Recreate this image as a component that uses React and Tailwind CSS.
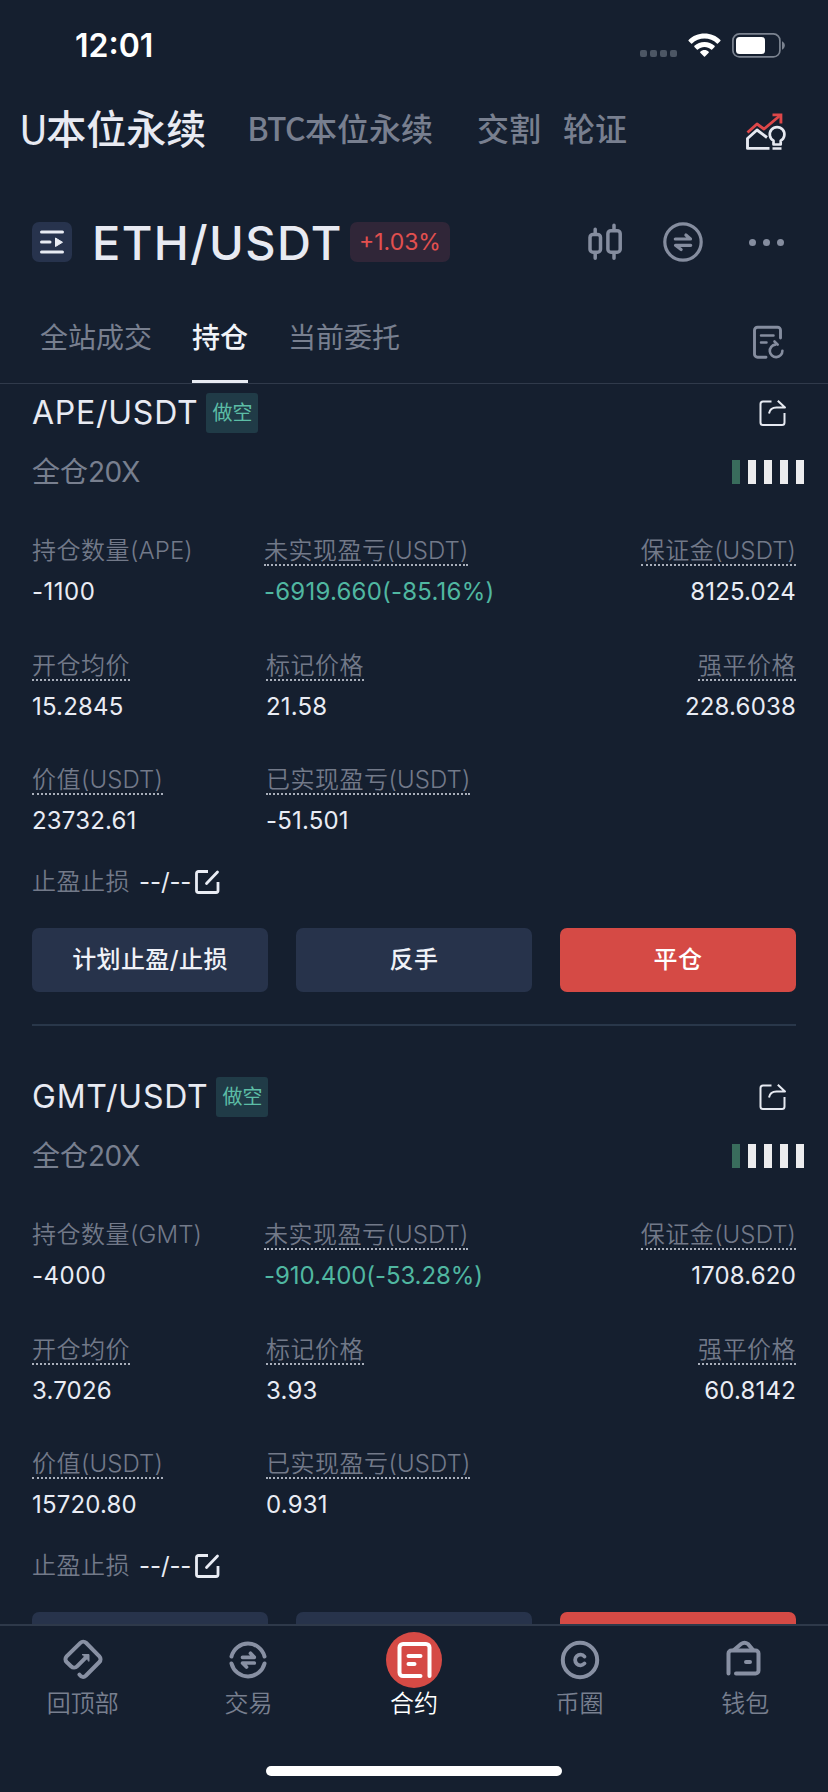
import React from "react";

const SANS = "font-['Inter','Noto_Sans_CJK_SC',sans-serif]";
const CJK = "font-['Noto_Sans_CJK_SC',sans-serif]";

const positions = [
  {
    base: "APE", qty: "-1100", pnl: "-6919.660(-85.16%)", margin: "8125.024",
    entry: "15.2845", mark: "21.58", liq: "228.6038", value: "23732.61", realized: "-51.501",
    pnlTracking: "tracking-[0.220px]",
  },
  {
    base: "GMT", qty: "-4000", pnl: "-910.400(-53.28%)", margin: "1708.620",
    entry: "3.7026", mark: "3.93", liq: "60.8142", value: "15720.80", realized: "0.931",
    pnlTracking: "tracking-[-0.080px]",
  },
];

function StatusBar() {
  return (
    <div className="flex h-[90px] items-center pl-[75px] pr-[43px]">
      <span className="mt-[1px] text-[32px] font-semibold leading-none text-white">12:01</span>
      <div className="ml-auto flex items-center">
        <div className="mr-[11px] mt-[17px] flex gap-[3px]">
          {[0, 1, 2, 3].map((i) => (
            <span key={i} className="size-[7px] rounded-[2px] bg-[#4c5664]" />
          ))}
        </div>
        <svg className="mr-[11px]" width="33" height="25" viewBox="0 0 33 25" fill="#fff">
          <path d="M16.5 0.6C10.3 0.6 4.7 3 .6 6.9c-.3.3-.3.8 0 1.100l2.500 2.500c.3.3.7.3 1 0 3.300-3.200 7.700-5 12.400-5s9.100 1.800 12.400 5c.3.3.7.3 1 0l2.500-2.500c.3-.3.3-.8 0-1.100C28.300 3 22.700.6 16.500.6z" />
          <path d="M16.500 8.900c-3.900 0-7.400 1.500-10.100 3.900-.3.3-.3.800 0 1.100l2.500 2.500c.3.3.7.3 1 0 1.800-1.600 4.100-2.500 6.600-2.500s4.800.9 6.600 2.500c.3.3.7.3 1 0l2.500-2.500c.3-.3.3-.8 0-1.100-2.700-2.400-6.200-3.900-10.100-3.900z" />
          <path d="M16.500 17.100c-1.600 0-3.100.6-4.200 1.600-.3.3-.3.7 0 1l3.700 3.900c.3.3.7.3 1 0l3.700-3.900c.3-.3.3-.7 0-1-1.100-1-2.600-1.600-4.200-1.600z" />
        </svg>
        <svg width="53" height="25" viewBox="0 0 53 25">
          <rect x="0.900" y="0.900" width="47" height="23" rx="6.500" fill="none" stroke="#7b8390" strokeWidth="1.700" />
          <rect x="4" y="4" width="29" height="17" rx="3.500" fill="#fff" />
          <path d="M50 8.300c1.700.7 2.800 2.300 2.800 4.200s-1.100 3.500-2.800 4.200z" fill="#7b8390" />
        </svg>
      </div>
    </div>
  );
}

function IdeaChartIcon() {
  return (
    <svg width="42" height="40" viewBox="0 0 42 40" fill="none">
      <path d="M2.500 20.500 12 12l7 5L34.500 4" stroke="#dd4749" strokeWidth="2.900" strokeLinejoin="round" />
      <path d="M27.500 2.900h8.400v8.600" stroke="#dd4749" strokeWidth="2.900" />
      <path d="M24.500 36.400H2.500V26.500l9.500-8.500 10 7.500" stroke="#e6e9f1" strokeWidth="2.900" strokeLinejoin="round" />
      <path d="M28.500 32.500v-3.800a7.300 7.300 0 1 1 7.200 0v3.800z" stroke="#e6e9f1" strokeWidth="2.700" strokeLinejoin="round" />
      <path d="M27.500 36.500h9" stroke="#e6e9f1" strokeWidth="2.500" />
    </svg>
  );
}

function MarketTabs() {
  return (
    <div className={`flex h-[76px] items-center pl-[19px] pr-[41px] text-[#787f8f] ${CJK}`}>
      <div className="flex h-full items-center pb-[3px] font-medium">
        <span className="text-[40px] leading-none text-[#e8eaf2]"><span className="font-normal tracking-[-1.500px]">U</span>本位永续</span>
        <span className="ml-[41px] text-[32px] leading-none"><span className="tracking-[-0.700px]">BTC</span>本位永续</span>
        <span className="ml-[44px] text-[32px] leading-none">交割</span>
        <span className="ml-[22px] text-[32px] leading-none">轮证</span>
      </div>
      <div className="ml-auto mt-[7px]"><IdeaChartIcon /></div>
    </div>
  );
}

function PairHeader() {
  return (
    <div className="flex h-[152px] items-center pl-8 pr-[44px]">
      <svg width="40" height="40" viewBox="0 0 40 40">
        <rect width="40" height="40" rx="7" fill="#27334d" />
        <path d="M9.500 10h21M9.500 20h8.500M9.500 30h21" stroke="#e9ecf4" strokeWidth="3" strokeLinecap="round" />
        <path d="M23.500 16v8.500l7-4.250z" fill="#e9ecf4" stroke="#e9ecf4" strokeLinejoin="round" />
      </svg>
      <span className="ml-[20px] w-[258px] whitespace-nowrap text-[47px] font-[450] leading-none tracking-[1.400px] text-[#e8eaf2]">ETH/USDT</span>
      <span className="flex h-10 w-[100px] items-center justify-center rounded-[7px] bg-[#302638] text-[23px] leading-none text-[#e2504f]">+1.03%</span>
      <div className="ml-auto flex items-center">
        <svg width="36" height="40" viewBox="0 0 36 40" fill="none" stroke="#858d9f" strokeWidth="3.500" strokeLinecap="round">
          <rect x="3" y="12.400" width="10.500" height="17.800" rx="3" />
          <path d="M8.200 7.300V11M8.200 32v4.200M27 3.300V8M27 32v4.200" />
          <rect x="20.900" y="8.700" width="12.300" height="21.500" rx="3" />
        </svg>
        <svg className="ml-10" width="40" height="40" viewBox="0 0 40 40" fill="none" stroke="#858d9f" strokeWidth="3.200" strokeLinecap="round">
          <circle cx="20" cy="20" r="18.200" />
          <path d="M12.300 17h15.200l-4.600-4M27.700 23.300h-15.200l5.600 4.200" strokeLinejoin="round" />
        </svg>
        <div className="ml-[46px] flex gap-[7px]">
          {[0, 1, 2].map((i) => (
            <span key={i} className="size-[7px] rounded-full bg-[#858d9f]" />
          ))}
        </div>
      </div>
    </div>
  );
}

function OrderTabs() {
  return (
    <div className="flex h-[66px] items-start border-b border-[#303a4b] pl-10 pr-[43px] text-[28px] leading-[41px] text-[#787f8f]">
      <span>全站成交</span>
      <span className="ml-10 h-[65px] border-b-[3px] border-[#e8ebf2] font-medium text-[#f1f3f8]">持仓</span>
      <span className="ml-10">当前委托</span>
      <svg className="ml-auto mt-[6px]" width="34" height="36" viewBox="0 0 34 36" fill="none" stroke="#858d9f" strokeWidth="2.900" strokeLinecap="round">
        <path d="M15 33.200H6.500a3 3 0 0 1-3-3v-24a3 3 0 0 1 3-3h20a3 3 0 0 1 3 3V14" />
        <path d="M10 11.500h12.500M10 18.500h5.500" strokeWidth="2.500" />
        <path d="M31.400 26.800a6.300 6.300 0 1 1-7-6.200" strokeWidth="2.600" />
        <path d="M23.500 17.500l3.200 3.200" strokeWidth="2.600" />
      </svg>
    </div>
  );
}

function Cell({ label, unit, value, plain, right, green, tracking = "tracking-[0.180px]", className = "" }) {
  return (
    <div className={`flex h-[82px] flex-col ${right ? "items-end" : "items-start"} ${className}`}>
      <span className={`h-[31px] border-b-2 border-dotted leading-[31px] text-[#727989] ${plain ? "border-transparent" : "border-[#a9afbb]"}`}>
        {label}
        {unit && <span className="tracking-[0.100px]">({unit})</span>}
      </span>
      <span className={`font-normal leading-[51px] ${tracking} ${green ? "text-[#50b7a1]" : "text-[#e9ecf4]"}`}>{value}</span>
    </div>
  );
}

function PositionCard({ p, first }) {
  return (
    <section className={`px-8 ${first ? "pt-[9px]" : "pt-[51px]"}`}>
      <div className="flex h-10 items-center">
        <span className="text-[32px] leading-none tracking-[0.750px] text-[#e8eaf2]">{p.base}/USDT</span>
        <span className="ml-[8px] flex h-10 w-[52px] items-center justify-center rounded-[3px] bg-[#203b47] text-[20px] leading-none text-[#5cbda6]">做空</span>
        <svg className="ml-auto mr-[9px]" width="30" height="30" viewBox="0 0 30 30" fill="none" stroke="#e6e9f1" strokeWidth="2" strokeLinejoin="round">
          <path d="M14.500 3.500H6a2.500 2.500 0 0 0-2.500 2.500v18.500A2.500 2.500 0 0 0 6 27h19a2.500 2.500 0 0 0 2.500-2.500V15" />
          <path d="M12 15.500c.7-4 3.200-6 7.500-6H28l-7.200-6.800" />
        </svg>
      </div>
      <div className="-mr-2 flex h-[78px] items-center">
        <span className="text-[28px] leading-none text-[#787f8f]">全仓<span className="tracking-[-0.700px]">20X</span></span>
        <div className="ml-auto flex gap-2">
          {["bg-[#396c5c]", "bg-[#ececee]", "bg-[#ececee]", "bg-[#ececee]", "bg-[#ececee]"].map((c, i) => (
            <span key={i} className={`h-6 w-2 ${c}`} />
          ))}
        </div>
      </div>
      <div className="mt-6 grid grid-cols-[232px_1fr_auto] gap-y-[32.5px] text-[24px] font-[350] tracking-[0.500px]">
        <Cell label="持仓数量" unit={p.base} value={p.qty} tracking="tracking-[0.500px]" plain />
        <Cell label="未实现盈亏" unit="USDT" value={p.pnl} tracking={p.pnlTracking} green />
        <Cell label="保证金" unit="USDT" value={p.margin} right />
        <Cell label="开仓均价" value={p.entry} />
        <Cell label="标记价格" value={p.mark} className="pl-[2px]" />
        <Cell label="强平价格" value={p.liq} right />
        <Cell label="价值" unit="USDT" value={p.value} />
        <Cell label="已实现盈亏" unit="USDT" value={p.realized} className="pl-[2px]" />
      </div>
      <div className="mt-[18px] flex h-9 items-center text-[24px] leading-none tracking-[0.500px]">
        <span className="font-[350] text-[#727989]">止盈止损</span>
        <span className="ml-[9px] w-[53px] whitespace-nowrap tracking-[-0.100px] text-[#e9ecf4]">--/--</span>
        <svg className="ml-[2px]" width="26" height="26" viewBox="0 0 26 26" fill="none" stroke="#e9ecf4" strokeWidth="2.800" strokeLinecap="round">
          <path d="M14 2.500H4.500a2 2 0 0 0-2 2v17a2 2 0 0 0 2 2h17.500a2 2 0 0 0 2-2V13" strokeLinecap="butt" />
          <path d="M12.500 14.500 23.500 3" />
        </svg>
      </div>
      <div className="mt-7 grid grid-cols-3 gap-7 text-[24px] font-medium text-[#f0f2f8]">
        {["计划止盈/止损", "反手", "平仓"].map((t, i) => (
          <button key={t} className={`h-16 rounded-[7px] tracking-[0.400px] ${i === 2 ? "bg-[#d54a45] text-white" : "bg-[#27334b]"}`}>{t}</button>
        ))}
      </div>
      <div className="mt-8 h-[2px] bg-[#29374a]" />
    </section>
  );
}

const navIcons = [
  <g key="top" strokeWidth="4">
    <path d="M32 24.300 22.300 34.200a4.500 4.500 0 0 1-6.300 0L11.600 30a4 4 0 0 1 0-5.600L25.400 10.800a4 4 0 0 1 5.600 0l13.400 13.600a4 4 0 0 1 0 5.600L31 43.500c-2.300 2.200-4.600 1.800-6.600-.9" />
    <path d="M27.500 22.500h6.500v6.500z" fill="#8890a3" stroke="#8890a3" strokeWidth="1" strokeLinejoin="round" />
  </g>,
  <g key="trade" strokeWidth="4">
    <path d="M11.500 24.500a17 17 0 0 1 33 0M11.500 31.500a17 17 0 0 0 33 0" />
    <path d="M22.500 25.300h11.800l-3.800-4M34.300 31h-11.800l4 4" strokeWidth="3.700" strokeLinejoin="round" />
  </g>,
  <g key="contract" stroke="#fff" strokeWidth="4">
    <circle cx="28" cy="28" r="28" fill="#d54a45" stroke="none" />
    <path d="M34.500 44H17a3.500 3.500 0 0 1-3.500-3.500v-25A3.500 3.500 0 0 1 17 12h23a3.500 3.500 0 0 1 3.500 3.500V44" />
    <path d="M22.500 24h12M22.500 32h6" />
  </g>,
  <g key="coin" strokeWidth="4">
    <circle cx="28" cy="28" r="17.200" />
    <path d="M32.500 24.600a5.300 5.300 0 1 0 0 6.800" strokeWidth="3.800" />
  </g>,
  <g key="wallet" strokeWidth="4">
    <path d="M11.500 41.500V21.500a3 3 0 0 1 3-3h24a3 3 0 0 1 3 3v17a3 3 0 0 1-3 3H19" />
    <path d="M17 18l7-6a6 6 0 0 1 7 0l5 6M29 30h4" />
  </g>,
];

function BottomNav() {
  return (
    <nav className="h-[168px] border-t-2 border-[#2e394a] pt-[6px]">
      <div className="grid grid-cols-5">
        {["回顶部", "交易", "合约", "币圈", "钱包"].map((t, i) => (
          <div key={t} className="flex flex-col items-center">
            <svg width="56" height="56" viewBox="0 0 56 56" fill="none" stroke="#8890a3" strokeLinecap="round">{navIcons[i]}</svg>
            <span className={`text-[24px] leading-[32px] ${i === 2 ? "text-white" : "text-[#787f8f]"} font-[350]`}>{t}</span>
          </div>
        ))}
      </div>
      <div className="mx-auto mt-[46px] h-[10px] w-[296px] rounded-full bg-white" />
    </nav>
  );
}

export default function App() {
  return (
    <div className={`flex h-[1792px] w-[828px] flex-col overflow-hidden bg-[#151f2f] ${SANS}`}>
      <StatusBar />
      <MarketTabs />
      <PairHeader />
      <OrderTabs />
      <main className="h-[1240px] shrink-0 overflow-hidden">
        {positions.map((p, i) => (
          <PositionCard key={p.base} p={p} first={i === 0} />
        ))}
      </main>
      <BottomNav />
    </div>
  );
}
